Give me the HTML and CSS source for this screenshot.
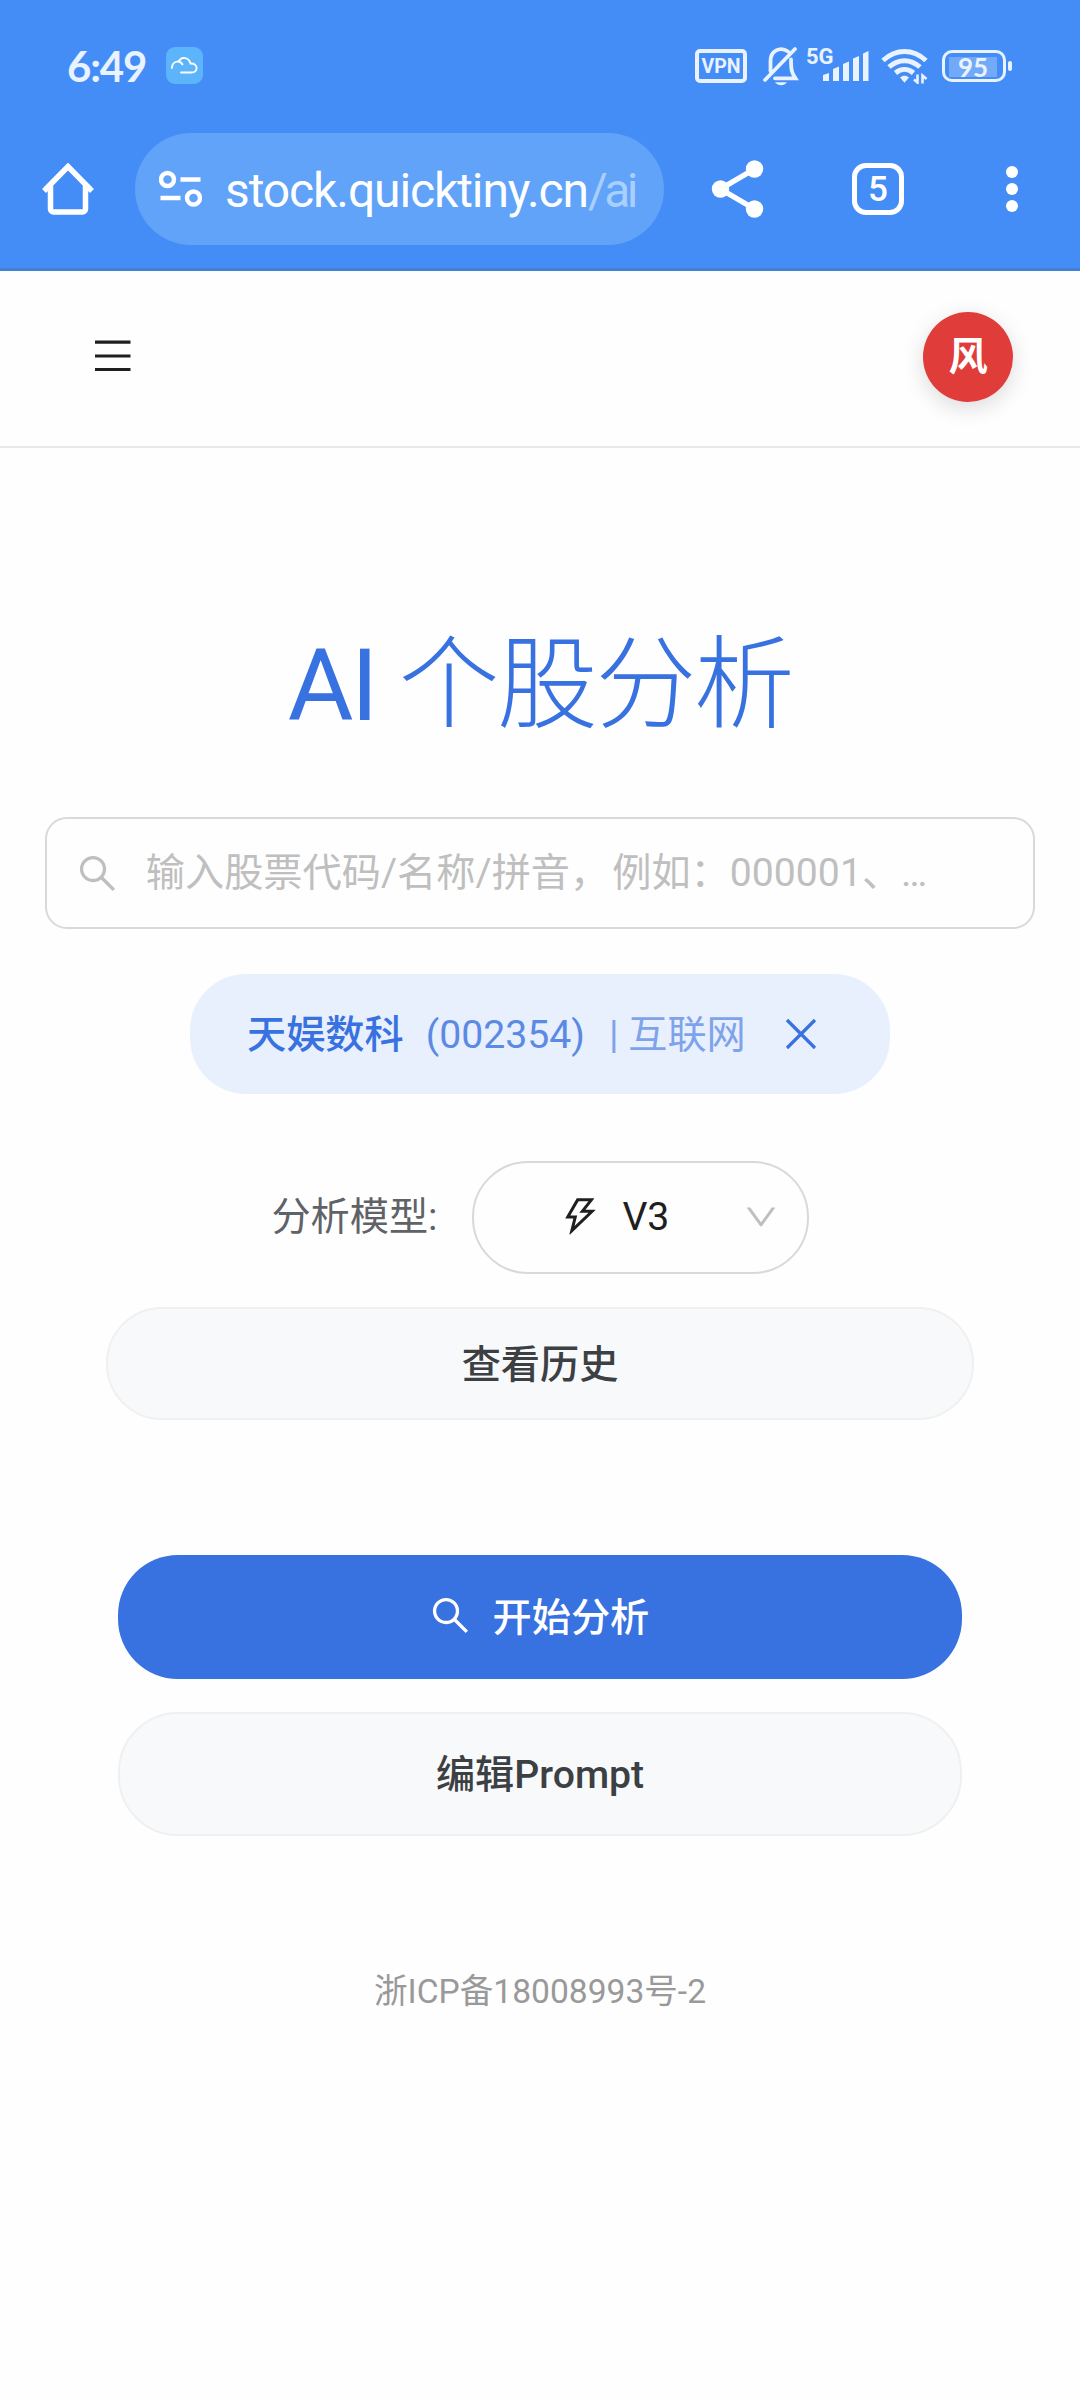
FILE: index.html
```html
<!DOCTYPE html>
<html lang="zh-CN">
<head>
    <meta charset="UTF-8">
    <meta name="viewport" content="width=device-width, initial-scale=1.0">
    <title>AI 个股分析</title>
    <link rel="stylesheet" href="styles.css">
</head>
<body>

<!-- Phone status bar and browser toolbar -->
<div class="browser">
    <div class="status-bar">
        <span class="time">6:49</span>
        <span class="cloud-badge">
            <svg width="37" height="37" viewBox="0 0 37 37" fill="none" stroke="#fff" stroke-width="1.8" stroke-linecap="round">
                <path d="M6 21c0-7 8-8.500 10.500-3.500M13 14c3-5 10-3.500 11.500 2.500 8-.5 8 9 1 9H15"/>
            </svg>
        </span>
        <div class="status-icons">
            <span class="vpn">VPN</span>
            <svg class="bell" width="36" height="40" viewBox="0 0 36 40" fill="none" stroke="#e8f3ff" stroke-width="3.800">
                <path d="M7.500 25V15C7.500 5 17 0 25 5.500M2 34L32 3M12 32.300h20.500C29 27 28 25 28 13.500" stroke-linecap="round"/>
                <path d="M12 36.300h12c-3 4-9 4-12 0z" fill="#e8f3ff" stroke="none"/>
            </svg>
            <div class="signal">
                <span class="network">5G</span>
                <svg width="46" height="30" viewBox="0 0 46 30" fill="#e8f3ff">
                    <path d="M0 24l6-2v8H0zM10 18l6-2.500V30h-6zM20 13l6-2.500V30h-6zM30 7.500L36 5v25h-6zM40 2.500L45.500 0v30H40z"/>
                </svg>
            </div>
            <svg class="wifi" width="48" height="36" viewBox="0 0 48 36" fill="none" stroke="#e8f3ff" stroke-width="5">
                <path d="M2 12.500C15 .500 32 .500 45 12.500M8 19c9.500-8.500 21.500-8.500 31 0M14.500 25c5.500-4.800 12.500-4.800 18 0"/>
                <path d="M19 29.500c3-2.500 6-2.500 9 0l-4.500 5.300z" fill="#e8f3ff" stroke="none"/>
                <path d="M36.500 26.500v8l-3.500-3M41.500 35.500v-8l4 3.500" stroke-width="2.600"/>
            </svg>
            <div class="battery"><span class="level">95</span></div>
        </div>
    </div>

    <div class="toolbar">
        <svg class="home" width="52" height="52" viewBox="0 0 52 52" fill="none" stroke="#fff" stroke-width="5.500">
            <path d="M2 28L26 3.500 50 28" />
            <path d="M8.500 23v23a3 3 0 003 3h29a3 3 0 003-3V23"/>
        </svg>
        <div class="address">
            <svg width="43" height="38" viewBox="0 0 43 38" fill="none" stroke="#fff" stroke-width="4.400">
                <circle cx="8.500" cy="9.500" r="6.500"/>
                <path d="M21.500 9.500h20M1.500 28h20"/>
                <circle cx="34.500" cy="28" r="6.500"/>
            </svg>
            <span class="url">stock.quicktiny.cn<span class="path">/ai</span></span>
        </div>
        <svg class="share" width="54" height="58" viewBox="0 0 54 58" fill="#fff">
            <path d="M43.500 9L9.500 29l34 20" fill="none" stroke="#fff" stroke-width="5.500"/>
            <circle cx="43.500" cy="9" r="8.700"/>
            <circle cx="9.500" cy="29" r="8.700"/>
            <circle cx="43.500" cy="49" r="8.700"/>
        </svg>
        <span class="tabs">5</span>
        <svg class="more" width="12" height="48" viewBox="0 0 12 48" fill="#fff">
            <circle cx="6" cy="7" r="6"/>
            <circle cx="6" cy="24" r="6"/>
            <circle cx="6" cy="41" r="6"/>
        </svg>
    </div>
</div>

<header>
    <svg width="36" height="32" viewBox="0 0 36 32" stroke="#1f1f1f" stroke-width="3.200">
        <path d="M0 2.200h35.500M0 16h35.500M0 29.500h35.500"/>
    </svg>
    <div class="avatar">风</div>
</header>

<main>
    <h1>AI 个股分析</h1>

    <!-- Search Bar -->
    <div class="search-bar">
        <svg class="icon" viewBox="0 0 1024 1024"><path d="M909.6 854.5L649.9 594.8C690.2 542.7 712 479 712 412c0-80.2-31.3-155.4-87.9-212.1-56.6-56.7-132-87.9-212.1-87.9s-155.5 31.3-212.1 87.9C143.2 256.5 112 331.8 112 412c0 80.1 31.3 155.5 87.9 212.1C256.5 680.8 331.8 712 412 712c67 0 130.600-21.8 182.7-62l259.7 259.6a8.200 8.200 0 0011.6 0l43.6-43.5a8.200 8.200 0 000-11.6zM570.4 570.4C528 612.7 471.8 636 412 636s-116-23.3-158.4-65.6C211.3 528 188 471.8 188 412s23.3-116.1 65.6-158.4C296 211.3 352.2 188 412 188s116.1 23.2 158.4 65.6S636 352.2 636 412s-23.3 116.1-65.6 158.4z"/></svg>
        <span class="placeholder">输入股票代码/名称/拼音<span class="comma">，</span>例如：000001、…</span>
    </div>

    <!-- Selected stock -->
    <div class="stock-tag">
        <span class="name">天娱数科</span>
        <span class="code">(002354)</span>
        <span class="industry">| 互联网</span>
        <svg class="close" width="32" height="32" viewBox="0 0 32 32" stroke="#3871e0" stroke-width="3.200">
            <path d="M2 2l28 28M30 2L2 30"/>
        </svg>
    </div>

    <!-- Model picker -->
    <div class="model-row">
        <span class="label">分析模型:</span>
        <div class="select">
            <svg class="icon" viewBox="0 0 1024 1024"><path d="M848 359.3H627.7L825.8 109c4.1-5.3.4-13-6.3-13H436c-2.8 0-5.5 1.5-6.9 4L170 547.5c-3.1 5.3.7 12 6.9 12h174.4l-89.4 357.6c-1.9 7.8 7.5 13.3 13.3 7.7L853.5 373c5.2-4.9 1.7-13.7-5.5-13.7zM378.2 732.5l60.3-241H281.1l189.6-327.4h224.6L487 427.4h211L378.2 732.5z"/></svg>
            <span class="value">V3</span>
            <svg class="arrow" viewBox="0 0 1024 1024"><path d="M884 256h-75c-5.1 0-9.9 2.5-12.9 6.6L512 654.2 227.9 262.6c-3-4.1-7.8-6.6-12.9-6.6h-75c-6.5 0-10.3 7.4-6.5 12.7l352.6 486.1c12.8 17.6 39 17.6 51.700 0l352.600-486.100c3.900-5.300.1-12.700-6.400-12.700z"/></svg>
        </div>
    </div>

    <button class="btn history">查看历史</button>

    <button class="btn primary">
        <svg class="icon" viewBox="0 0 1024 1024"><path d="M909.6 854.5L649.9 594.8C690.2 542.7 712 479 712 412c0-80.2-31.3-155.4-87.9-212.1-56.6-56.7-132-87.9-212.1-87.9s-155.5 31.3-212.1 87.9C143.2 256.5 112 331.8 112 412c0 80.1 31.3 155.5 87.9 212.1C256.5 680.8 331.8 712 412 712c67 0 130.600-21.8 182.7-62l259.7 259.6a8.200 8.200 0 0011.6 0l43.6-43.5a8.200 8.200 0 000-11.6zM570.4 570.4C528 612.7 471.8 636 412 636s-116-23.3-158.4-65.6C211.3 528 188 471.8 188 412s23.3-116.1 65.6-158.4C296 211.3 352.2 188 412 188s116.1 23.2 158.4 65.6S636 352.2 636 412s-23.3 116.1-65.6 158.4z"/></svg>
        <span>开始分析</span>
    </button>
    <button class="btn edit">编辑Prompt</button>
</main>

<footer>浙ICP备18008993号-2</footer>

</body>
</html>
```
FILE: styles.css
```css
/* Basic Reset */
* {
    margin: 0;
    padding: 0;
    box-sizing: border-box;
}

body {
    font-family: Roboto, 'Noto Sans CJK SC', sans-serif;
    font-size: 39.2px;
    background-color: #fefefe;
    color: #1f1f1f;
    min-height: 100vh;
}

svg {
    display: block;
    flex-shrink: 0;
}

/* Browser */
.browser {
    height: 271px;
    background-color: #448df7;
    border-bottom: 3px solid #4280d3;
    color: white;
}

.status-bar {
    display: flex;
    align-items: center;
    height: 133px;
    padding: 0 74px 2px 67px;
    color: #e8f3ff;
}

.time {
    width: 99px;
    font-family: Lato, sans-serif;
    font-size: 42px;
    font-weight: 700;
    letter-spacing: -1.2px;
}

.cloud-badge {
    width: 37px;
    height: 37px;
    border-radius: 9px;
    background-color: #5cb4fb;
}

.status-icons {
    display: flex;
    align-items: center;
    margin-left: auto;
}

.vpn {
    width: 52px;
    height: 34px;
    border: 4px solid #e8f3ff;
    border-radius: 5px;
    font-size: 19.5px;
    font-weight: 700;
    line-height: 27px;
    text-align: center;
}

.bell {
    margin-left: 16px;
}

.signal {
    position: relative;
    margin-left: 24px;
}

.network {
    position: absolute;
    top: -7px;
    left: -17px;
    font-size: 22px;
    font-weight: 700;
    line-height: 26px;
}

.wifi {
    margin-left: 12px;
}

.battery {
    position: relative;
    width: 64px;
    height: 32px;
    margin-left: 13px;
    padding: 4px;
    border: 3px solid #e8f3ff;
    border-radius: 10px;
}

.battery::after {
    content: '';
    position: absolute;
    top: 8px;
    right: -9px;
    width: 4px;
    height: 10px;
    border-radius: 2px;
    background-color: #e8f3ff;
}

.level {
    display: block;
    width: 48px;
    height: 20px;
    background-color: #73a9f9;
    font-family: Lato, sans-serif;
    font-size: 26px;
    font-weight: 700;
    line-height: 20px;
    text-align: center;
}

.toolbar {
    display: flex;
    align-items: center;
    height: 112px;
    padding: 0 62px 0 42px;
}

.address {
    display: flex;
    align-items: center;
    width: 529px;
    height: 112px;
    margin-left: 41px;
    padding-left: 24px;
    border-radius: 56px;
    background-color: #60a3f8;
}

.url {
    margin-top: 2px;
    margin-left: 23px;
    font-size: 48px;
    letter-spacing: -1.1px;
    white-space: nowrap;
}

.url .path {
    color: #a9cffc;
    letter-spacing: -3.5px;
}

.share {
    margin-left: 47px;
}

.tabs {
    width: 52px;
    height: 52px;
    margin-left: 87px;
    border: 5px solid white;
    border-radius: 14px;
    font-size: 35px;
    font-weight: 500;
    line-height: 44px;
    text-align: center;
}

.more {
    margin-left: auto;
}

/* Header */
header {
    display: flex;
    justify-content: space-between;
    align-items: center;
    height: 177px;
    padding: 0 67px 4px 95px;
    border-bottom: 2px solid #e8e8ea;
}

header svg {
    margin-top: -2px;
}

.avatar {
    width: 90px;
    height: 90px;
    border-radius: 50%;
    background-color: #e03c39;
    box-shadow: 0 6px 22px rgba(0, 0, 0, 0.14);
    color: white;
    font-weight: 700;
    line-height: 91px;
    text-align: center;
}

/* Content */
main {
    display: flex;
    flex-direction: column;
    align-items: center;
    padding-top: 168px;
}

h1 {
    height: 140px;
    color: #3871e0;
    font-family: Roboto, 'Noto Sans CJK SC Light', 'Noto Sans CJK SC', sans-serif;
    font-size: 100.8px;
    font-weight: 400;
    letter-spacing: -2.4px;
    line-height: 140px;
}

.icon {
    width: 44.8px;
    height: 44.8px;
    fill: currentColor;
}

.search-bar {
    display: flex;
    align-items: center;
    width: 990px;
    height: 112px;
    margin-top: 61px;
    padding-left: 28px;
    border: 2px solid #d9d9d9;
    border-radius: 22px;
    color: #bfbfbf;
    white-space: nowrap;
}

.placeholder {
    margin-left: 26px;
    padding-bottom: 8px;
}

.comma {
    letter-spacing: 3px;
}

.stock-tag {
    display: flex;
    align-items: center;
    width: 700px;
    height: 120px;
    margin-top: 45px;
    padding-left: 57px;
    border-radius: 56px;
    background-color: #e8effd;
    color: #3871e0;
    white-space: nowrap;
}

.stock-tag .name {
    padding-bottom: 7px;
    font-weight: 500;
}

.stock-tag .code {
    margin-left: 22px;
    padding-top: 1px;
    opacity: 0.8;
}

.stock-tag .industry {
    margin-left: 24px;
    padding-bottom: 7px;
    opacity: 0.6;
}

.stock-tag .close {
    margin-left: 39px;
}

.model-row {
    display: flex;
    align-items: center;
    margin-top: 67px;
}

.model-row .label {
    padding-bottom: 9px;
    color: #5f6368;
}

.select {
    display: flex;
    align-items: center;
    width: 337px;
    height: 113px;
    margin-left: 34px;
    padding: 0 27px 2px 84px;
    border: 2px solid #d9d9d9;
    border-radius: 56px;
}

.select .value {
    margin-left: 20px;
}

.arrow {
    width: 38px;
    height: 38px;
    margin-left: auto;
    fill: #bfbfbf;
}

/* Buttons */
.btn {
    display: flex;
    justify-content: center;
    align-items: center;
    width: 844px;
    height: 124px;
    padding-bottom: 6px;
    border: 2px solid #f0f0f0;
    border-radius: 60px;
    background-color: #f8f9fb;
    color: #3c4043;
    font-family: inherit;
    font-size: 39.2px;
    font-weight: 500;
}

.history {
    width: 868px;
    height: 113px;
    margin-top: 33px;
    border-radius: 56px;
}

.primary {
    margin-top: 135px;
    padding: 0 3px 3px 0;
    border: none;
    background-color: #3871e0;
    color: white;
}

.primary span {
    margin-left: 20px;
    padding-bottom: 4px;
}

.edit {
    margin-top: 33px;
}

/* Footer */
footer {
    margin-top: 130px;
    color: #999;
    font-size: 33.6px;
    line-height: 52px;
    text-align: center;
}
```
